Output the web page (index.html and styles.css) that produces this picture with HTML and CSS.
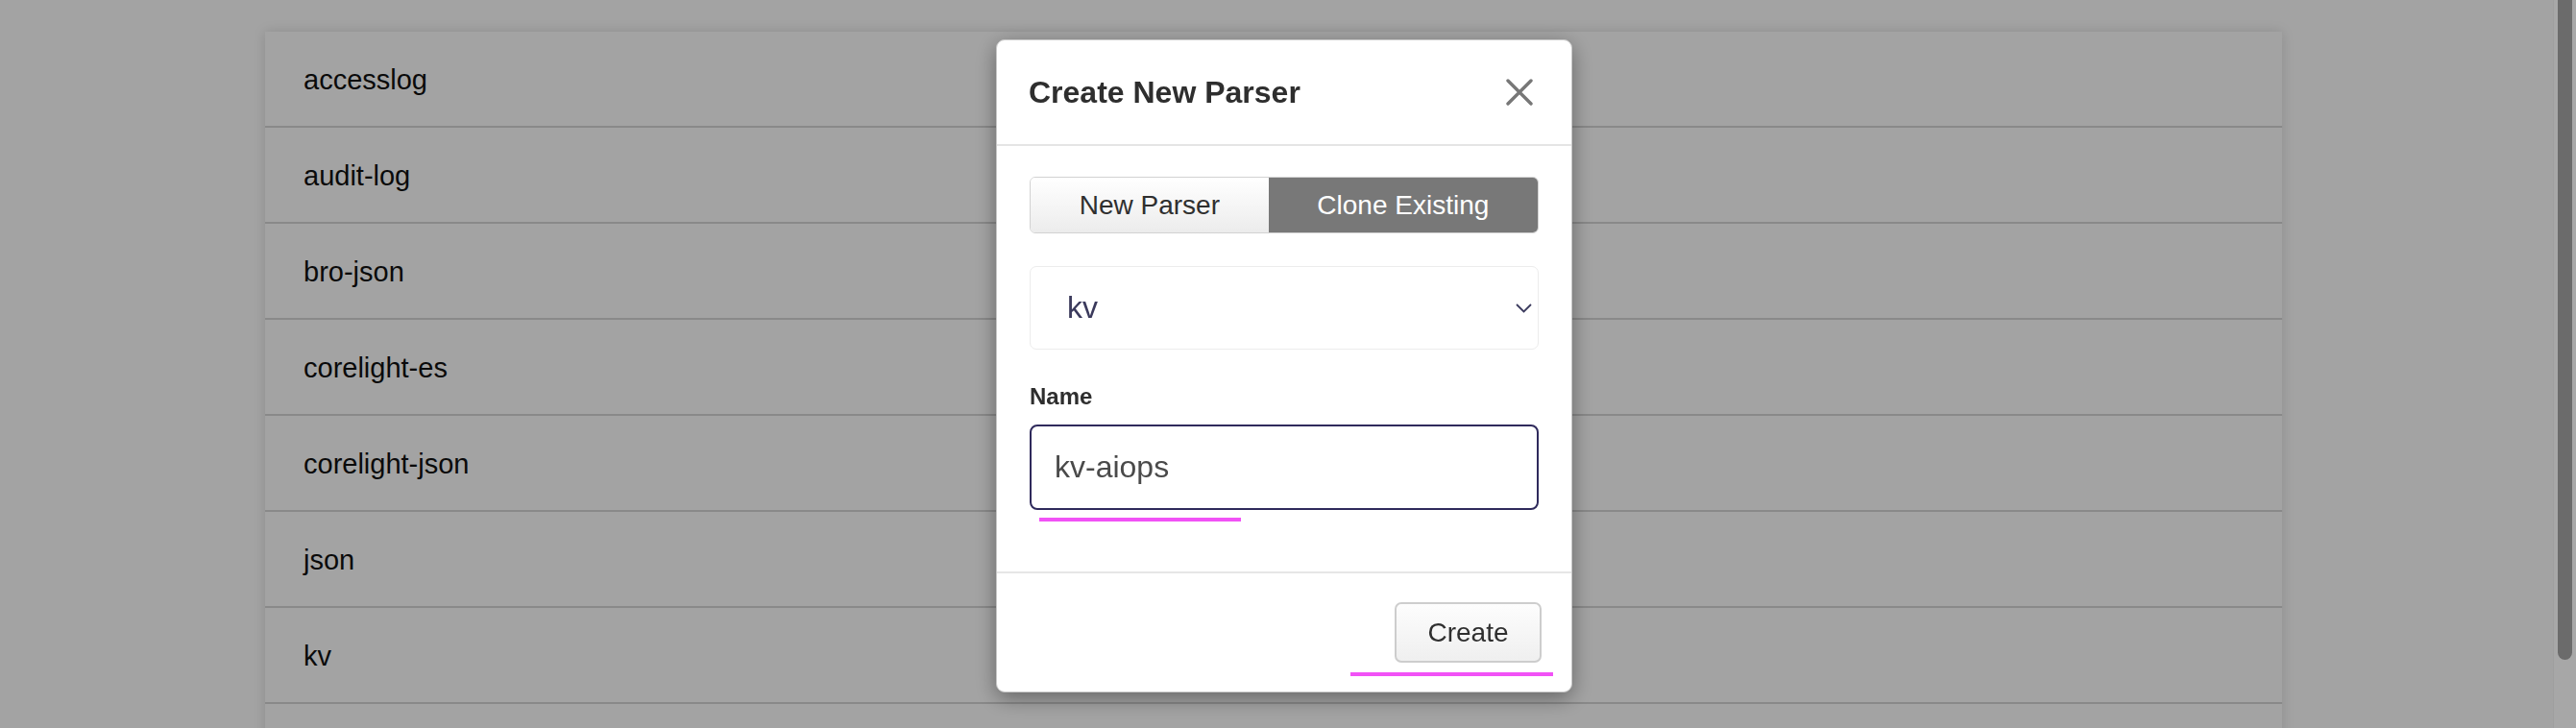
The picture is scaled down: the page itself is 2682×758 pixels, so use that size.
FILE: index.html
```html
<!DOCTYPE html>
<html lang="en">
<head>
<meta charset="utf-8">
<title>Create New Parser</title>
<link rel="stylesheet" href="styles.css">
</head>
<body>
<div class="page">
  <ul class="parser-list">
    <li class="parser-row">accesslog</li>
    <li class="parser-row">audit-log</li>
    <li class="parser-row">bro-json</li>
    <li class="parser-row">corelight-es</li>
    <li class="parser-row">corelight-json</li>
    <li class="parser-row">json</li>
    <li class="parser-row">kv</li>
    <li class="parser-row parser-row-empty" aria-hidden="true"></li>
  </ul>
</div>

<div class="backdrop"></div>

<div class="scroll-track"><div class="scroll-thumb"></div></div>

<div class="modal">
  <div class="modal-header">
    <h2 class="modal-title">Create New Parser</h2>
    <svg class="close-icon" width="28" height="28" viewBox="0 0 28 28" aria-label="Close">
      <path d="M2 2 L26 26 M26 2 L2 26" stroke="#777" stroke-width="3.4" stroke-linecap="round" fill="none"/>
    </svg>
  </div>
  <div class="modal-body">
    <div class="segmented">
      <div class="segment">New Parser</div>
      <div class="segment segment-active">Clone Existing</div>
    </div>
    <div class="select">
      <span class="select-value">kv</span>
      <svg class="chevron" width="17" height="10" viewBox="0 0 17 10">
        <path d="M1 1 L8.5 8.5 L16 1" stroke="#3c3b5e" stroke-width="1.8" fill="none"/>
      </svg>
    </div>
    <div class="field-label">Name</div>
    <div class="text-input">kv-aiops</div>
    <div class="mark mark-input"></div>
  </div>
  <div class="modal-footer">
    <div class="btn">Create</div>
    <div class="mark mark-button"></div>
  </div>
</div>
</body>
</html>
```
FILE: styles.css
```css
html, body {
  margin: 0;
  padding: 0;
  height: 758px;
  overflow: hidden;
  background: #ffffff;
  font-family: "Liberation Sans", Arial, Helvetica, sans-serif;
}

.page {
  padding: 33px 0 0 276px;
}

.parser-list {
  list-style: none;
  margin: 0;
  padding: 0;
  width: 2100px;
  background: #ffffff;
  box-shadow: 0 0 12px rgba(0, 0, 0, 0.14);
}

.parser-row {
  height: 100px;
  box-sizing: border-box;
  border-bottom: 2px solid #d6d6d6;
  display: flex;
  align-items: center;
  padding: 2px 0 0 40px;
  font-size: 29px;
  line-height: 33px;
  color: #111111;
}

.parser-row-empty {
  height: 60px;
  border-bottom: 0;
}

.backdrop {
  position: fixed;
  inset: 0;
  background: rgba(0, 0, 0, 0.36);
}

.scroll-track {
  position: fixed;
  top: 0;
  right: 0;
  bottom: 0;
  width: 24px;
  box-sizing: border-box;
  padding: 0 4px;
  background: #a7a7a7;
  border-left: 1px solid #9f9f9f;
}

.scroll-thumb {
  margin-top: -12px;
  height: 699px;
  border-radius: 8px;
  background: #6b6b6b;
}

.modal {
  position: fixed;
  left: 1037px;
  top: 41px;
  width: 600px;
  box-sizing: border-box;
  background: #ffffff;
  border: 1px solid #c9c9c9;
  border-radius: 9px;
  box-shadow: 0 6px 22px rgba(0, 0, 0, 0.38);
}

.modal-header {
  height: 108px;
  display: flex;
  align-items: center;
  justify-content: space-between;
  padding: 0 40px 0 33px;
  border-bottom: 2px solid #e5e5e5;
}

.modal-title {
  margin: 0;
  font-size: 32px;
  line-height: 37px;
  font-weight: bold;
  color: #2e2e2e;
}

.close-icon {
  display: block;
}

.modal-body {
  padding: 32px 34px 52px 34px;
  border-bottom: 2px solid #e6e6e6;
}

.segmented {
  display: flex;
  height: 59px;
  box-sizing: border-box;
  border: 1px solid #d2d2d2;
  border-radius: 6px;
  overflow: hidden;
}

.segment {
  flex: 1 1 auto;
  display: flex;
  align-items: center;
  justify-content: center;
  font-size: 28px;
  line-height: 32px;
  color: #2f2f2f;
  background: linear-gradient(#ffffff, #ececec);
}

.segment-active {
  background: #787878;
  color: #ffffff;
}

.select {
  margin-top: 34px;
  height: 87px;
  box-sizing: border-box;
  border: 1px solid #ececec;
  border-radius: 7px;
  display: flex;
  align-items: center;
  justify-content: space-between;
  padding: 0 6px 0 38px;
}

.select-value {
  font-size: 32px;
  line-height: 37px;
  color: #3b3a5c;
}

.chevron {
  display: block;
}

.field-label {
  margin-top: 35px;
  font-size: 24px;
  line-height: 28px;
  font-weight: bold;
  color: #2e2e2e;
}

.text-input {
  margin-top: 15px;
  height: 89px;
  box-sizing: border-box;
  border: 2px solid #2f2a5c;
  border-radius: 8px;
  display: flex;
  align-items: center;
  padding-left: 24px;
  font-size: 32px;
  line-height: 37px;
  color: #4a4a4a;
}

.mark {
  height: 4px;
  background: #f152f6;
}

.mark-input {
  margin: 8px 0 0 10px;
  width: 210px;
}

.modal-footer {
  display: flex;
  flex-direction: column;
  align-items: flex-end;
  padding: 30px 31px 16px 0;
}

.btn {
  width: 153px;
  height: 63px;
  box-sizing: border-box;
  border: 2px solid #cdcdcd;
  border-radius: 7px;
  background: linear-gradient(#fdfdfd, #efefef);
  display: flex;
  align-items: center;
  justify-content: center;
  font-size: 28px;
  line-height: 32px;
  color: #2f2f2f;
}

.mark-button {
  margin: 10px -12px 0 0;
  width: 211px;
}
```
